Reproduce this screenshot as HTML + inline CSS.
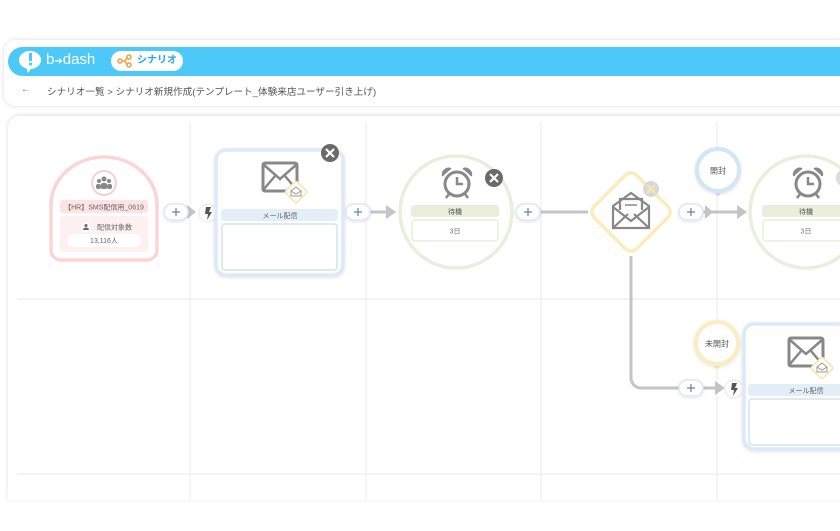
<!DOCTYPE html>
<html><head><meta charset="utf-8"><style>
*{margin:0;padding:0;box-sizing:border-box}
body{width:840px;height:531px;background:#fff;overflow:hidden;position:relative;font-family:"Liberation Sans","Noto Sans CJK JP",sans-serif}
.hdr{position:absolute;left:4px;top:40px;width:850px;height:66px;background:#fff;border-radius:12px;box-shadow:0 0 5px rgba(0,0,0,.15)}
.bar{position:absolute;left:8px;top:47px;width:850px;height:29px;background:#4cc9f8;border-radius:15px 0 0 15px}
.logo{position:absolute;left:46px;top:51px;color:#fff;font-size:15px;letter-spacing:0}
.pill{position:absolute;left:111px;top:51px;width:72px;height:20px;background:#fff;border-radius:10px;color:#2aa9e0;font-size:10px;line-height:20px;padding-left:26px;font-weight:bold}
.bc{position:absolute;left:47px;top:84px;font-size:9.6px;color:#555}
.canvas{position:absolute;left:8px;top:116px;width:850px;height:384px;background:#fff;border-radius:12px 12px 0 0;box-shadow:0 -1px 5px rgba(0,0,0,.13)}
svg text{font-family:"Liberation Sans","Noto Sans CJK JP",sans-serif}
</style></head><body>
<div class="hdr"></div>
<div class="bar"></div>
<svg style="position:absolute;left:18px;top:50px" width="28" height="24" viewBox="0 0 28 24"><ellipse cx="12" cy="10" rx="11" ry="9" fill="#fff"/><path d="M8 16 L10 23 L14 17Z" fill="#fff"/><rect x="11" y="3" width="3" height="8" fill="#4cc9f8"/><circle cx="12.5" cy="14" r="1.6" fill="#4cc9f8"/></svg>
<div class="logo">b<span style="font-size:10px">➔</span>dash</div>
<div class="pill">シナリオ</div>
<svg style="position:absolute;left:117px;top:54px" width="16" height="14" viewBox="0 0 16 14"><g fill="none" stroke="#f0a040" stroke-width="1.5"><circle cx="3" cy="7" r="2"/><circle cx="12" cy="3" r="2"/><circle cx="12" cy="11" r="2"/><path d="M5 7h3M8 7L10 3.5M8 7L10 10.5"/></g></svg>
<div class="bc"><span style="position:absolute;left:-26px;color:#777">←</span>シナリオ一覧 &gt; シナリオ新規作成(テンプレート_体験来店ユーザー引き上げ)</div>
<div class="canvas"></div>
<svg style="position:absolute;left:0;top:0" width="840" height="531" viewBox="0 0 840 531">
<defs>
<filter id="sh" x="-20%" y="-20%" width="140%" height="140%"><feDropShadow dx="0" dy="1" stdDeviation="1.5" flood-color="#000" flood-opacity=".12"/></filter>
<g id="env"><rect x="-17" y="-14" width="34" height="28" rx="2" fill="none" stroke="#888" stroke-width="3"/><path d="M-16 -12 L0 2 L16 -12 M-16 12 L-5 -1 M16 12 L5 -1" fill="none" stroke="#888" stroke-width="2.5"/></g>
<g id="badge"><rect x="-8" y="-8" width="16" height="16" transform="rotate(45)" rx="2" fill="#fff" stroke="#f8e4a8" stroke-width="1.5"/><path d="M-5 -1 L0 -5 L5 -1 V4 H-5Z M-5 -1 L0 2 L5 -1" fill="none" stroke="#999" stroke-width="1"/></g>
<g id="clock"><circle r="12" fill="none" stroke="#888" stroke-width="3"/><path d="M0 -7 V0 H6" fill="none" stroke="#888" stroke-width="2.5"/><path d="M-14 -8 a6 6 0 0 1 8 -7 M14 -8 a6 6 0 0 0 -8 -7" fill="#888" stroke="#888" stroke-width="2"/><path d="M-8 10 l-3 4 M8 10 l3 4" stroke="#888" stroke-width="2.5"/></g>
<g id="plus"><rect x="-12" y="-8" width="24" height="16" rx="8" fill="#fff" stroke="#dbe9f5" stroke-width="1.5" filter="url(#sh)"/><path d="M-4 0h8M0 -4v8" stroke="#5a8aa0" stroke-width="1.2"/></g>
<g id="bolt"><circle r="9" fill="#fff" stroke="#eee" stroke-width="1.5"/><path d="M-2 -6 H3 L1 -1 H4 L-1 7 L0 1 H-3Z" fill="#555"/></g>
<g id="xd"><circle r="9" fill="#6a6a6a"/><path d="M-4 -4 L4 4 M4 -4 L-4 4" stroke="#fff" stroke-width="2.2"/></g>
</defs>
<g stroke="#eeeeee" stroke-width="1.2">
<line x1="190" y1="122" x2="190" y2="500"/><line x1="366" y1="122" x2="366" y2="500"/><line x1="541" y1="122" x2="541" y2="500"/><line x1="717" y1="122" x2="717" y2="500"/>
<line x1="17" y1="299" x2="840" y2="299"/><line x1="17" y1="474" x2="840" y2="474"/>
</g>
<g stroke="#c4c4c4" stroke-width="3" fill="none">
<line x1="188" y1="212" x2="194" y2="212"/>
<line x1="370" y1="212" x2="388" y2="212"/>
<line x1="540" y1="212" x2="588" y2="212"/>
<line x1="703" y1="212" x2="740" y2="212"/>
<path d="M631 256 V378 a10 10 0 0 0 10 10 H715"/>
</g>
<g fill="#c4c4c4"><path d="M187 205 L196 212 L187 219Z"/><path d="M386 205 L396 212 L386 219Z"/><path d="M737 205 L747 212 L737 219Z"/><path d="M705 205 L713 212 L705 219Z"/><path d="M715 381 L725 388 L715 395Z"/></g>
<path d="M51 250 V205 a53 48 0 0 1 106 0 V250 a10 10 0 0 1 -10 10 H61 a10 10 0 0 1 -10 -10Z" fill="#fff" stroke="#fbd5d5" stroke-width="3.5"/>
<circle cx="104" cy="183" r="12" fill="#fff" stroke="#f8d0d0" stroke-width="2"/>
<g fill="#888"><circle cx="104" cy="179" r="2.5"/><circle cx="99" cy="181" r="2"/><circle cx="109" cy="181" r="2"/><rect x="101" y="183" width="6" height="6" rx="2"/><rect x="96" y="184" width="5" height="5" rx="2"/><rect x="107" y="184" width="5" height="5" rx="2"/></g>
<rect x="60" y="200" width="88" height="13" rx="3" fill="#fde3e3"/>
<text x="104" y="209.5" font-size="7" fill="#666" text-anchor="middle">【HR】SMS配信用_0619</text>
<rect x="60" y="216" width="88" height="36" rx="4" fill="#fdf0f0"/>
<circle cx="86" cy="227" r="5" fill="#fff"/><circle cx="86" cy="225.5" r="1.5" fill="#666"/><path d="M83 230 a3 2.5 0 0 1 6 0Z" fill="#666"/>
<text x="97" y="229.5" font-size="7" fill="#666">配信対象数</text>
<rect x="67" y="234" width="74" height="13" rx="6.5" fill="#fff"/>
<text x="104" y="243" font-size="7" fill="#666" text-anchor="middle">13,116人</text>
<use href="#plus" x="176" y="212"/>
<use href="#bolt" x="208" y="213"/>
<rect x="216" y="150" width="127" height="125" rx="10" fill="#fff" stroke="#dde9f6" stroke-width="3.5" filter="url(#sh)"/>
<use href="#env" x="280" y="177"/>
<use href="#badge" x="296" y="192"/>
<rect x="221" y="209" width="117" height="12" rx="3" fill="#e3eef9"/>
<text x="280" y="218" font-size="7" fill="#666" text-anchor="middle">メール配信</text>
<rect x="222" y="224" width="115" height="46" rx="3" fill="#fff" stroke="#dde9f6" stroke-width="2"/>
<use href="#xd" x="330" y="153"/>
<use href="#plus" x="358" y="212"/>
<circle cx="456" cy="212" r="56" fill="#fff" stroke="#eaefdc" stroke-width="3.5"/>
<use href="#clock" x="457" y="184"/>
<rect x="411" y="205" width="88" height="12" rx="3" fill="#eaeedd"/>
<text x="455" y="214" font-size="7" fill="#555" text-anchor="middle">待機</text>
<rect x="412" y="220" width="86" height="21" rx="3" fill="#fff" stroke="#eef2e2" stroke-width="2"/>
<text x="455" y="233.5" font-size="7" fill="#777" text-anchor="middle">3日</text>
<use href="#xd" x="494" y="178"/>
<use href="#plus" x="528" y="212"/>
<rect x="-30" y="-30" width="60" height="60" rx="8" transform="translate(631 212) rotate(45)" fill="#fff" stroke="#fbecbd" stroke-width="3.5"/>
<g fill="none" stroke="#888" stroke-width="2.2"><path d="M613 206 L631 193 L649 206 V228 H613Z"/><path d="M613 228 L628 214 M649 228 L634 214"/><path d="M620 210 V199 H642 V210"/><path d="M625 205 H637" stroke-width="1.5"/><path d="M613 207 L631 221 L649 207"/></g>
<circle cx="651" cy="189" r="8" fill="#d8d8d8"/><path d="M647 185 L655 193 M655 185 L647 193" stroke="#fbe6a8" stroke-width="2"/>
<use href="#plus" x="691" y="212"/>
<path d="M711 188 L718 197 L725 188Z" fill="#d4e5f5"/>
<circle cx="718" cy="170" r="21" fill="#fff" stroke="#d4e5f5" stroke-width="4" filter="url(#sh)"/>
<text x="718" y="173.5" font-size="8" fill="#555" text-anchor="middle">開封</text>
<circle cx="806" cy="212" r="56" fill="#fff" stroke="#eaefdc" stroke-width="3.5"/>
<use href="#clock" x="808" y="184"/>
<rect x="762" y="205" width="88" height="12" rx="3" fill="#eaeedd"/>
<text x="806" y="214" font-size="7" fill="#555" text-anchor="middle">待機</text>
<rect x="763" y="220" width="86" height="21" rx="3" fill="#fff" stroke="#eef2e2" stroke-width="2"/>
<text x="806" y="233.5" font-size="7" fill="#777" text-anchor="middle">3日</text>
<circle cx="845" cy="178" r="9" fill="#ddd"/>
<use href="#plus" x="691" y="388"/>
<use href="#bolt" x="734" y="389"/>
<path d="M710 361 L717 370 L724 361Z" fill="#fbedc2"/>
<circle cx="717" cy="343" r="21" fill="#fff" stroke="#fbedc2" stroke-width="4" filter="url(#sh)"/>
<text x="717" y="346.5" font-size="8" fill="#555" text-anchor="middle">未開封</text>
<rect x="744" y="324" width="127" height="125" rx="10" fill="#fff" stroke="#dde9f6" stroke-width="3.5" filter="url(#sh)"/>
<use href="#env" x="806" y="352"/>
<use href="#badge" x="822" y="368"/>
<rect x="748" y="384" width="117" height="12" rx="3" fill="#e3eef9"/>
<text x="806" y="393" font-size="7" fill="#666" text-anchor="middle">メール配信</text>
<rect x="749" y="399" width="115" height="46" rx="3" fill="#fff" stroke="#dde9f6" stroke-width="2"/>
</svg>
</body></html>
